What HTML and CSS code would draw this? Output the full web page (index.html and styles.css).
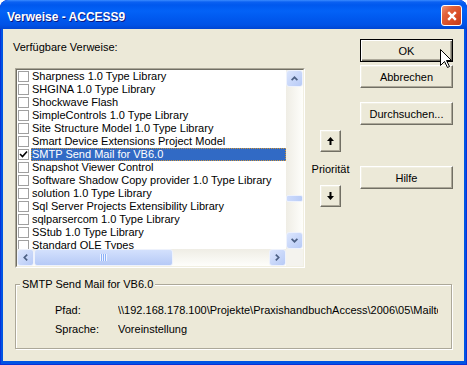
FILE: index.html
```html
<!DOCTYPE html>
<html lang="de">
<head>
  <meta charset="UTF-8" />
  <title>Verweise - ACCESS9</title>
  <link rel="stylesheet" href="styles.css">
</head>
<body>
  <div class="window">
    <!-- Title bar -->
    <div class="titlebar">
      <span class="title">Verweise - ACCESS9</span>
      <span class="close">
        <svg width="10" height="10" viewBox="0 0 10 10"><path d="M1.2 1.2 L8.8 8.8 M8.8 1.2 L1.2 8.8" stroke="#fff" stroke-width="2.4" fill="none"/></svg>
      </span>
    </div>

    <div class="client">
      <div class="main">
        <!-- Reference list -->
        <div class="refs">
          <div class="label">Verfügbare Verweise:</div>
          <div class="listbox">
            <div class="list-inner">
              <div class="items" id="items"></div>
              <div class="vscroll">
                <span class="sb-btn">
                  <svg width="7" height="5" viewBox="0 0 7 5"><path d="M0.6 4.2 L3.5 1.3 L6.4 4.2" fill="none" stroke="#4D6185" stroke-width="1.7"/></svg>
                </span>
                <span class="vthumb"></span>
                <span class="sb-btn end">
                  <svg width="7" height="5" viewBox="0 0 7 5"><path d="M0.6 0.8 L3.5 3.7 L6.4 0.8" fill="none" stroke="#4D6185" stroke-width="1.7"/></svg>
                </span>
              </div>
              <div class="hscroll">
                <span class="sb-btn">
                  <svg width="5" height="7" viewBox="0 0 5 7"><path d="M4.2 0.6 L1.3 3.5 L4.2 6.4" fill="none" stroke="#4D6185" stroke-width="1.7"/></svg>
                </span>
                <span class="hthumb"><span class="grip"></span></span>
                <span class="sb-btn end">
                  <svg width="5" height="7" viewBox="0 0 5 7"><path d="M0.8 0.6 L3.7 3.5 L0.8 6.4" fill="none" stroke="#4D6185" stroke-width="1.7"/></svg>
                </span>
              </div>
              <div class="corner"></div>
            </div>
          </div>
        </div>

        <!-- Priority -->
        <div class="priority">
          <button class="arrow-btn up">
            <svg width="7" height="8" viewBox="0 0 7 8"><path d="M3.5 0 L7 4 L4.5 4 L4.5 8 L2.5 8 L2.5 4 L0 4 Z" fill="#000"/></svg>
          </button>
          <div class="prio-label">Priorität</div>
          <button class="arrow-btn down">
            <svg width="7" height="8" viewBox="0 0 7 8"><path d="M3.5 8 L7 4 L4.5 4 L4.5 0 L2.5 0 L2.5 4 L0 4 Z" fill="#000"/></svg>
          </button>
        </div>

        <!-- Buttons -->
        <div class="actions">
          <button class="btn default">OK</button>
          <button class="btn">Abbrechen</button>
          <button class="btn browse">Durchsuchen...</button>
          <button class="btn help">Hilfe</button>
        </div>
      </div>

      <!-- Details -->
      <div class="group">
        <span class="legend">SMTP Send Mail for VB6.0</span>
        <div class="info">
          <span>Pfad:</span>
          <span class="value">\\192.168.178.100\Projekte\PraxishandbuchAccess\2006\05\Mailto\vbSendMail.dll</span>
          <span>Sprache:</span>
          <span class="value">Voreinstellung</span>
        </div>
      </div>
    </div>

    <svg class="cursor" width="13" height="20" viewBox="0 0 13 20">
      <path d="M0.5 0.5 L0.5 16.5 L4.5 12.5 L7.5 18.5 L9.5 17.5 L6.5 11.5 L11.5 11.5 Z" fill="#fff" stroke="#000" stroke-width="1"/>
    </svg>
  </div>

  <script>
    const refs = [
      "Sharpness 1.0 Type Library",
      "SHGINA 1.0 Type Library",
      "Shockwave Flash",
      "SimpleControls 1.0 Type Library",
      "Site Structure Model 1.0 Type Library",
      "Smart Device Extensions Project Model",
      "SMTP Send Mail for VB6.0",
      "Snapshot Viewer Control",
      "Software Shadow Copy provider 1.0 Type Library",
      "solution 1.0 Type Library",
      "Sql Server Projects Extensibility Library",
      "sqlparsercom 1.0 Type Library",
      "SStub 1.0 Type Library",
      "Standard OLE Types"
    ];
    const selected = "SMTP Send Mail for VB6.0";

    const items = document.getElementById("items");
    refs.forEach(name => {
      const row = document.createElement("div");
      row.className = "item" + (name === selected ? " selected" : "");
      const mark = name === selected
        ? '<svg width="9" height="9" viewBox="0 0 9 9"><path d="M1 4 L3.5 6.5 L8 1.5" fill="none" stroke="#000" stroke-width="1.6"/></svg>'
        : "";
      row.innerHTML = `<span class="check">${mark}</span><span class="name">${name}</span>`;
      items.appendChild(row);
    });
  </script>
</body>
</html>
```

FILE: styles.css
```css
* {
  box-sizing: border-box;
}

body {
  margin: 0;
  font-family: "Liberation Sans", Arial, sans-serif;
  font-size: 11px;
  color: #000;
  background: #fff;
}

.window {
  position: relative;
  width: 467px;
  height: 365px;
  display: flex;
  flex-direction: column;
  background: #0054E3;
  border-radius: 8px 8px 0 0;
  box-shadow: inset 0 0 0 1px #0831D9;
  overflow: hidden;
}

/* Title bar */

.titlebar {
  flex: none;
  height: 29px;
  display: flex;
  justify-content: space-between;
  align-items: flex-start;
  padding: 5px 5px 0 7px;
  border-radius: 8px 8px 0 0;
  background: linear-gradient(#3A8BFF 0px, #0B61F2 2px, #0058EE 5px, #0362F7 11px, #0058EE 19px, #0052E6 25px, #0045D2 29px);
}

.title {
  margin-top: 5px;
  color: #fff;
  font-weight: bold;
  font-size: 12px;
  line-height: 14px;
  text-shadow: 1px 1px #0A1883;
}

.close {
  width: 21px;
  height: 21px;
  display: flex;
  align-items: center;
  justify-content: center;
  border: 1px solid #fff;
  border-radius: 3px;
  background: linear-gradient(135deg, #EE9477 0%, #E2623A 30%, #D84C26 65%, #C43B1B 100%);
}

/* Client area */

.client {
  flex: 1;
  margin: 0 3px 4px;
  background: #ECE9D8;
}

.main {
  display: flex;
  align-items: flex-start;
  padding-top: 10px;
}

.refs {
  margin-left: 10px;
}

.label {
  margin-top: 2px;
  line-height: 13px;
}

.listbox {
  margin: 14px 0 0 2px;
  width: 290px;
  height: 200px;
  border: 1px solid;
  border-color: #ACA899 #fff #fff #ACA899;
}

.list-inner {
  height: 100%;
  display: grid;
  grid-template-columns: 1fr 17px;
  grid-template-rows: 1fr 17px;
  background: #fff;
  border: 1px solid;
  border-color: #716F64 #F1EFE2 #F1EFE2 #716F64;
}

.items {
  overflow: hidden;
  padding-left: 1px;
}

.item {
  display: flex;
  height: 13px;
  line-height: 13px;
  white-space: nowrap;
}

.check {
  flex: none;
  width: 11px;
  height: 11px;
  margin: 1px 2px 0 0;
  display: flex;
  align-items: center;
  justify-content: center;
  border: 1px solid #A0A0A0;
  background: #fff;
}

.name {
  flex: 1;
  padding-left: 1px;
}

.item.selected .name {
  background: #316AC5;
  color: #fff;
  outline: 1px dotted #CE953A;
  outline-offset: -1px;
}

/* Scroll bars */

.vscroll {
  display: flex;
  flex-direction: column;
  background: linear-gradient(to right, #EFEDE5, #FEFEFB);
}

.hscroll {
  display: flex;
  background: linear-gradient(#EFEDE5, #FEFEFB);
}

.corner {
  background: #F4F3EE;
}

.sb-btn {
  flex: none;
  width: 17px;
  height: 17px;
  display: flex;
  align-items: center;
  justify-content: center;
  border: 1px solid #EEF2FC;
  border-radius: 3px;
  background: linear-gradient(135deg, #DCE6FD, #B7CAF6);
}

.sb-btn.end {
  margin: auto 0 0 auto;
}

.vthumb {
  margin-top: 108px;
  height: 7px;
  border: 1px solid #EEF2FC;
  border-radius: 2px;
  background: linear-gradient(to right, #CDDBFC, #B9CCF7);
}

.hthumb {
  width: 139px;
  display: flex;
  align-items: center;
  justify-content: center;
  border: 1px solid #EEF2FC;
  border-radius: 3px;
  background: linear-gradient(#D3E0FD, #B6CAF6);
}

.grip {
  width: 7px;
  height: 7px;
  background: repeating-linear-gradient(to right, #EEF4FE 0 1px, #8CB0F8 1px 2px);
}

/* Priority */

.priority {
  margin-left: 7px;
  width: 37px;
  display: flex;
  flex-direction: column;
  align-items: center;
}

.prio-label {
  margin-top: 11px;
  line-height: 13px;
}

.arrow-btn,
.btn {
  padding: 0;
  font: inherit;
  color: #000;
  background: #ECE9D8;
  border: 1px solid;
  border-color: #fff #716F64 #716F64 #fff;
  box-shadow: inset -1px -1px #ACA899, inset 1px 1px #F1EFE2;
}

.arrow-btn {
  width: 21px;
  height: 22px;
  display: flex;
  align-items: center;
  justify-content: center;
}

.arrow-btn.up {
  margin-top: 91px;
}

.arrow-btn.down {
  margin-top: 9px;
}

/* Buttons */

.actions {
  margin-left: 11px;
  width: 93px;
  display: flex;
  flex-direction: column;
}

.btn {
  width: 93px;
  height: 23px;
  margin-top: 3px;
}

.btn.default {
  margin-top: 0;
  border-color: #000;
  box-shadow: inset 1px 1px #fff, inset -1px -1px #716F64, inset -2px -2px #ACA899;
}

.btn.browse {
  margin-top: 14px;
}

.btn.help {
  margin-top: 41px;
}

/* Group box */

.group {
  position: relative;
  margin: 16px 0 0 12px;
  width: 437px;
  height: 65px;
  padding: 19px 0 0 39px;
  border: 1px solid #ACA899;
  box-shadow: inset 1px 1px #fff, 1px 1px #fff;
}

.legend {
  position: absolute;
  top: -7px;
  left: 4px;
  padding: 0 2px;
  line-height: 13px;
  background: #ECE9D8;
}

.info {
  display: grid;
  grid-template-columns: 63px 320px;
  row-gap: 6px;
  line-height: 13px;
}

.value {
  overflow: hidden;
  white-space: nowrap;
}

.cursor {
  position: absolute;
  left: 440px;
  top: 49px;
}
```
